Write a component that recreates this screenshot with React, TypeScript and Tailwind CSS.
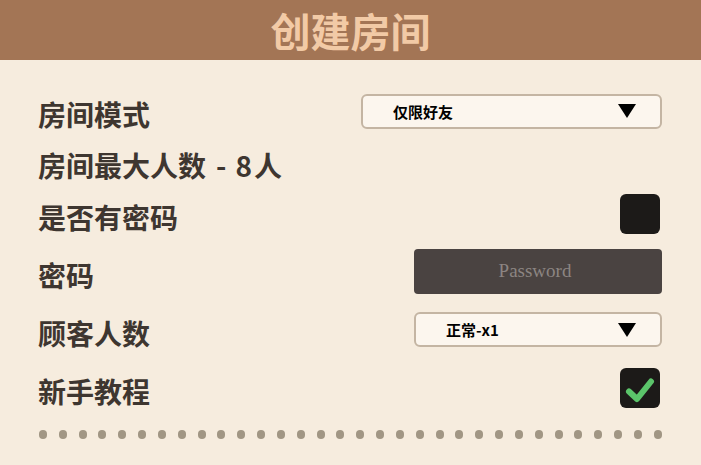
import React from "react"

const font = { fontFamily: '"Noto Sans CJK SC", "Noto Sans", sans-serif' }

function Triangle() {
  return (
    <svg width="18" height="14" viewBox="0 0 18 14">
      <path d="M0 0 H18 L9 14 Z" fill="#000" />
    </svg>
  )
}

function Select({ value, width }: { value: string; width: string }) {
  return (
    <div
      className={`${width} h-[35px] flex items-center justify-between rounded-[6px] border-2 border-[#c4b5a3] bg-[#fcf6ee] pl-[30px] pr-[24px]`}
    >
      <span className="text-[15px] font-bold text-black leading-none">{value}</span>
      <Triangle />
    </div>
  )
}

function Checkbox({ checked }: { checked?: boolean }) {
  return (
    <div className="w-[40px] h-[40px] rounded-[6px] bg-[#1c1a18] flex items-center justify-center">
      {checked && (
        <svg width="40" height="40" viewBox="0 0 40 40">
          <path
            d="M9 23.5 L17 31 L31 13.5"
            fill="none"
            stroke="#5bc46a"
            strokeWidth="6"
            strokeLinecap="round"
            strokeLinejoin="round"
          />
        </svg>
      )}
    </div>
  )
}

function Row({ label, h, children }: { label: React.ReactNode; h: string; children?: React.ReactNode }) {
  return (
    <div className={`${h} flex items-center justify-between`}>
      <span className="text-[28px] font-bold text-[#3e3630] leading-none pt-[6px]">{label}</span>
      {children}
    </div>
  )
}

export default function App() {
  return (
    <div className="w-[701px] h-[465px] bg-[#f6ecde] overflow-hidden" style={font}>
      <div className="h-[60px] bg-[#a37555] flex items-center justify-center">
        <h1 className="text-[40px] font-bold text-[#f2caa6] leading-none">创建房间</h1>
      </div>

      <div className="pl-[38px] pr-[39px] pt-[26px]">
        <Row label="房间模式" h="h-[50px]">
          <Select value="仅限好友" width="w-[301px]" />
        </Row>
        <Row
          label={
            <>
              房间最大人数<span className="ml-[10px] mr-[9px]">-</span>8<span className="ml-[2px]">人</span>
            </>
          }
          h="h-[52px]"
        />
        <Row label="是否有密码" h="h-[52px]">
          <div className="pr-[2px]">
            <Checkbox />
          </div>
        </Row>
        <Row label="密码" h="h-[63px]">
          <div className="w-[248px] h-[45px] rounded-[4px] bg-[#4a4341] flex items-center justify-center pr-[6px]">
            <span
              className="text-[19px] text-[#8c8582]"
              style={{ fontFamily: '"Liberation Serif", serif' }}
            >
              Password
            </span>
          </div>
        </Row>
        <Row label="顾客人数" h="h-[53px]">
          <Select value="正常-x1" width="w-[248px]" />
        </Row>
        <Row label="新手教程" h="h-[64px]">
          <div className="pr-[2px]">
            <Checkbox checked />
          </div>
        </Row>

        <div className="mt-[10px] flex justify-between pl-[1px]">
          {Array.from({ length: 32 }).map((_, i) => (
            <div key={i} className="w-[8px] h-[9px] rounded-full bg-[#a19684]" />
          ))}
        </div>
      </div>
    </div>
  )
}
